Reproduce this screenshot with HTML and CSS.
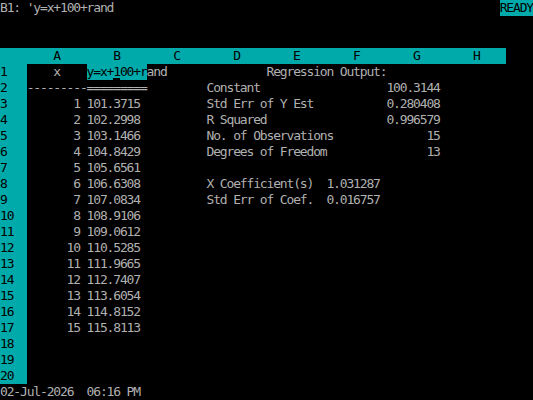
FILE: index.html
```html
<!DOCTYPE html>
<html lang="en">
<head>
    <meta charset="UTF-8">
    <title>Regression - Worksheet</title>
    <link rel="stylesheet" href="styles.css">
</head>
<body>
    <div class="screen">
        <div class="line status"><span>B1: 'y=x+100+rand</span><span class="mode">READY</span></div>
        <div class="line"></div>
        <div class="line"></div>
        <div class="line"><span class="rownum"></span><span class="colbar"><span class="col">A</span><span class="col">B</span><span class="col">C</span><span class="col">D</span><span class="col">E</span><span class="col">F</span><span class="col">G</span><span class="col">H</span></span></div>
        <div class="line"><span class="rownum">1</span>    x    <span class="pointer">y=x+<span class="cursor">1</span>00+r</span>and               Regression Output:</div>
        <div class="line"><span class="rownum">2</span>---------=========         Constant                   100.3144</div>
        <div class="line"><span class="rownum">3</span>       1 101.3715          Std Err of Y Est           0.280408</div>
        <div class="line"><span class="rownum">4</span>       2 102.2998          R Squared                  0.996579</div>
        <div class="line"><span class="rownum">5</span>       3 103.1466          No. of Observations              15</div>
        <div class="line"><span class="rownum">6</span>       4 104.8429          Degrees of Freedom               13</div>
        <div class="line"><span class="rownum">7</span>       5 105.6561</div>
        <div class="line"><span class="rownum">8</span>       6 106.6308          X Coefficient(s)  1.031287</div>
        <div class="line"><span class="rownum">9</span>       7 107.0834          Std Err of Coef.  0.016757</div>
        <div class="line"><span class="rownum">10</span>       8 108.9106</div>
        <div class="line"><span class="rownum">11</span>       9 109.0612</div>
        <div class="line"><span class="rownum">12</span>      10 110.5285</div>
        <div class="line"><span class="rownum">13</span>      11 111.9665</div>
        <div class="line"><span class="rownum">14</span>      12 112.7407</div>
        <div class="line"><span class="rownum">15</span>      13 113.6054</div>
        <div class="line"><span class="rownum">16</span>      14 114.8152</div>
        <div class="line"><span class="rownum">17</span>      15 115.8113</div>
        <div class="line"><span class="rownum">18</span></div>
        <div class="line"><span class="rownum">19</span></div>
        <div class="line"><span class="rownum">20</span></div>
        <div class="line">02-Jul-2026  06:16 PM</div>
    </div>
</body>
</html>
```

FILE: styles.css
```css
body {
    margin: 0;
    background: #000;
}
.screen {
    --cw: 6.6625px;
    width: 533px;
    height: 400px;
    overflow: hidden;
    background: #000;
    color: #b0b0b0;
    font-family: "DejaVu Sans Mono", "Liberation Mono", monospace;
    font-size: 13px;
    letter-spacing: -1.164px;
}
.line {
    height: 16px;
    line-height: 16px;
    white-space: pre;
}
.status {
    display: flex;
    justify-content: space-between;
}
.mode {
    width: calc(var(--cw) * 5);
    background: #00aaaa;
    color: #000;
}
.rownum,
.colbar,
.pointer,
.cursor {
    display: inline-block;
    vertical-align: top;
    height: 16px;
}
.rownum {
    width: calc(var(--cw) * 4);
    background: #00aaaa;
    color: #000;
}
.colbar {
    display: inline-flex;
    width: calc(var(--cw) * 72);
    background: #00aaaa;
    color: #000;
}
.col {
    width: calc(var(--cw) * 9);
    text-align: center;
}
.pointer {
    width: calc(var(--cw) * 9);
    background: #00aaaa;
    color: #000;
}
.cursor {
    box-shadow: inset 0 -2px 0 #000;
}
```
